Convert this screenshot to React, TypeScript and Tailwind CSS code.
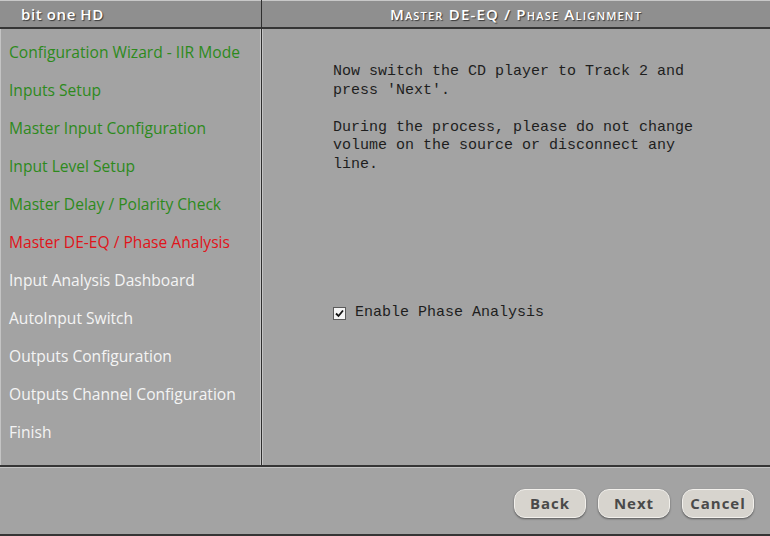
import * as React from "react";

const steps = [
    {label: "Configuration Wizard - IIR Mode", state: "done"},
    {label: "Inputs Setup", state: "done"},
    {label: "Master Input Configuration", state: "done"},
    {label: "Input Level Setup", state: "done"},
    {label: "Master Delay / Polarity Check", state: "done"},
    {label: "Master DE-EQ / Phase Analysis", state: "current"},
    {label: "Input Analysis Dashboard", state: "todo"},
    {label: "AutoInput Switch", state: "todo"},
    {label: "Outputs Configuration", state: "todo"},
    {label: "Outputs Channel Configuration", state: "todo"},
    {label: "Finish", state: "todo"},
];

function WizardButton({label}: {label: string}) {
    return (
        <button className="w-[72px] h-[29px] rounded-[11px] bg-[#d7d4ce] border border-[#f2f0ec] shadow-[0_1px_2px_rgba(0,0,0,0.45)] text-[15px] font-bold tracking-[1px] text-[#4a4a4a] font-['Open_Sans',sans-serif]">
            {label}
        </button>
    );
}

export default function App() {
    const [phase, setPhase] = React.useState(true);

    return (
        <div className="w-[770px] h-[536px] bg-[#a3a3a3] flex flex-col overflow-hidden select-none">
            <div className="flex h-[467px] border-b-2 border-[#353535]">
                {/* left: steps */}
                <div className="w-[262px] flex flex-col border-r border-[#2f2f2f] shadow-[inset_1px_0_0_#c4c4c4,inset_-1px_0_0_#c4c4c4]">
                    <div className="h-[29px] bg-[#8f8f8f] border-t border-[#c8c8c8] border-b-2 border-b-[#353535] flex items-center pl-[21px]">
                        <span className="text-white text-[15px] font-semibold tracking-[0.6px] font-['Open_Sans',sans-serif] [text-shadow:1px_1px_1px_#3a3a3a]">
                            bit one HD
                        </span>
                    </div>
                    <ul className="pt-[4px] pl-[9px] font-['Open_Sans',sans-serif] text-[15.6px]">
                        {steps.map(s => (
                            <li
                                key={s.label}
                                className={
                                    "h-[38px] leading-[38px] whitespace-nowrap " +
                                    (s.state === "done"
                                        ? "text-[#2d8a1c]"
                                        : s.state === "current"
                                            ? "text-[#e0141a]"
                                            : "text-[#f4f4f4]")
                                }
                            >
                                {s.label}
                            </li>
                        ))}
                    </ul>
                </div>

                {/* right: page */}
                <div className="flex-1 flex flex-col shadow-[inset_1px_0_0_#c4c4c4]">
                    <div className="h-[29px] bg-[#8f8f8f] border-t border-[#c8c8c8] border-b-2 border-b-[#353535] flex items-center justify-center">
                        <span className="text-white text-[15px] [font-variant:small-caps] font-semibold tracking-[1.2px] font-['Open_Sans',sans-serif] [text-shadow:1px_1px_1px_#3a3a3a]">
                            Master DE-EQ / Phase Alignment
                        </span>
                    </div>
                    <div className="pl-[71px] pt-[34px] font-['Liberation_Mono',monospace] text-[15px] leading-[18.5px] text-[#1e1e1e]">
                        <p>Now switch the CD player to Track 2 and<br/>press 'Next'.</p>
                        <p className="mt-[18.5px]">During the process, please do not change<br/>volume on the source or disconnect any<br/>line.</p>
                        <label className="mt-[130px] flex items-center gap-[9px]">
                            <span
                                onClick={() => setPhase(!phase)}
                                className="w-[13px] h-[13px] bg-[#f4f4f4] border border-[#5a5a5a] flex items-center justify-center"
                            >
                                {phase && (
                                    <svg width="9" height="9" viewBox="0 0 9 9">
                                        <path d="M1 4.5 L3.5 7 L8 1.5" fill="none" stroke="#111" strokeWidth="1.8"/>
                                    </svg>
                                )}
                            </span>
                            <span>Enable Phase Analysis</span>
                        </label>
                    </div>
                </div>
            </div>

            <div className="flex-1 flex items-center justify-end gap-[12px] pr-[16px] pt-[4px] border-t border-[#c4c4c4] border-b-2 border-b-[#353535]">
                <WizardButton label="Back"/>
                <WizardButton label="Next"/>
                <WizardButton label="Cancel"/>
            </div>
        </div>
    );
}
